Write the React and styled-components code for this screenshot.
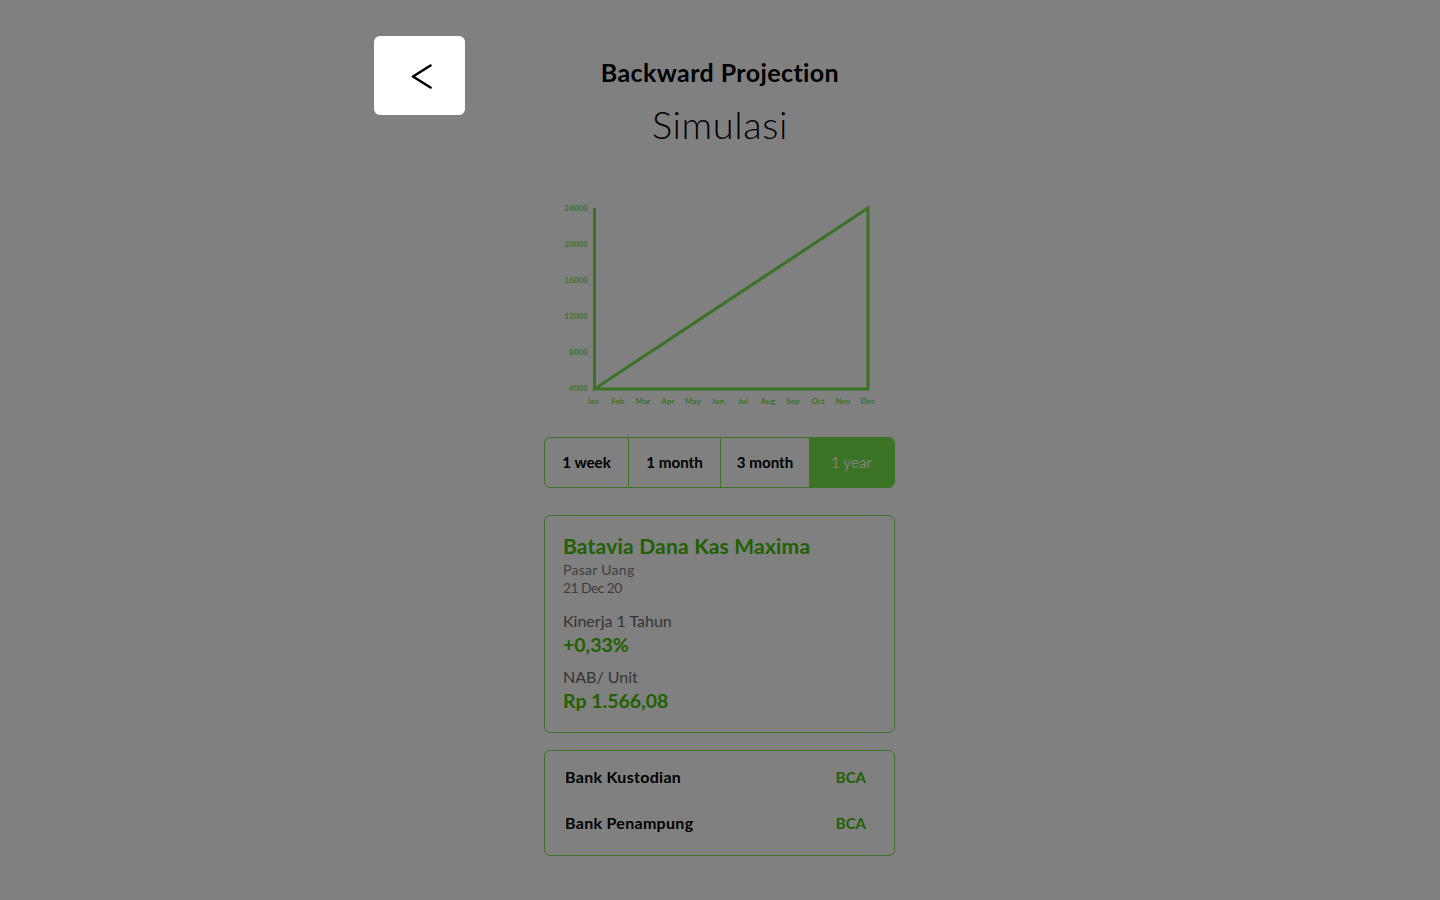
import styled, { createGlobalStyle } from "styled-components";

const GREEN = "#3a7324";
const DARK_GREEN = "#1f6000";

const Global = createGlobalStyle`
html, body { margin: 0; background: #808080; }
body { font-family: "Lato", "Open Sans", sans-serif; }
`
const Page = styled.div`
height: 900px;
overflow: hidden;
display: flex;
flex-direction: column;
align-items: center;
padding-top: 36px;
box-sizing: border-box;
`
const Header = styled.div`
width: 692px;
height: 133px;
display: grid;
grid-template-columns: 91px 1fr 91px;
`
const BackButton = styled.button`
width: 91px;
height: 79px;
background: #fff;
border: none;
border-radius: 6px;
padding: 0;
display: flex;
align-items: center;
justify-content: center;
`
const Titles = styled.div`
display: flex;
flex-direction: column;
align-items: center;
`
const Title = styled.h1`
margin: 19px 0 0;
font-size: 25px;
line-height: 34px;
font-weight: 700;
letter-spacing: 0.4px;
color: #000;
`
const Subtitle = styled.h2`
margin: 12px 0 0;
font-size: 38px;
line-height: 46px;
font-weight: 300;
letter-spacing: 0.6px;
color: #000;
`
const ChartBox = styled.div`
width: 351px;
height: 268px;
margin-right: 1px;
`
const Column = styled.div`
width: 351px;
margin-right: 1px;
display: flex;
flex-direction: column;
`
const Tabs = styled.div`
height: 51px;
box-sizing: border-box;
display: grid;
grid-template-columns: 83px 92px 89px 1fr;
border: 1px solid ${GREEN};
border-radius: 6px;
overflow: hidden;
`
const Tab = styled.div`
display: flex;
align-items: center;
justify-content: center;
padding-bottom: 2px;
font-size: 15.2px;
font-weight: ${p => (p.$active ? 400 : 700)};
color: ${p => (p.$active ? "#808080" : "#000")};
background: ${p => (p.$active ? GREEN : "transparent")};
border-left: ${p => (p.$first || p.$active ? "none" : `1px solid ${GREEN}`)};
`
const Card = styled.div`
box-sizing: border-box;
border: 1px solid ${GREEN};
border-radius: 6px;
`
const InfoCard = styled(Card)`
margin-top: 27px;
height: 218px;
padding: 16px 18px 0;
`
const FundName = styled.div`
font-size: 21px;
line-height: 28px;
font-weight: 700;
letter-spacing: 0.2px;
color: ${DARK_GREEN};
`
const Meta = styled.div`
font-size: 14px;
line-height: 18px;
font-weight: 400;
letter-spacing: ${p => p.$spacing || 0}px;
color: #3e3e3e;
margin-top: ${p => p.$top || 0}px;
`
const Label = styled.div`
font-size: 16px;
line-height: 20px;
color: #333;
margin-top: ${p => p.$top}px;
`
const Value = styled.div`
font-size: 19.5px;
line-height: 26px;
font-weight: 700;
color: ${DARK_GREEN};
padding-top: 1px;
`
const BankCard = styled(Card)`
margin-top: 17px;
height: 106px;
padding: 15px 28px 0 20px;
display: flex;
flex-direction: column;
gap: 25px;
`
const BankRow = styled.div`
display: flex;
justify-content: space-between;
align-items: center;
height: 21px;
`
const BankName = styled.span`
font-size: 16px;
font-weight: 700;
letter-spacing: 0.3px;
color: #000;
`
const BankValue = styled.span`
font-size: 15px;
font-weight: 700;
color: ${DARK_GREEN};
`
const AxisText = styled.text`
font-family: "Lato", sans-serif;
font-size: 8px;
font-weight: 700;
letter-spacing: 0.1px;
fill: ${GREEN};
`

const months = ["Jan", "Feb", "Mar", "Apr", "May", "Jun", "Jul", "Aug", "Sep", "Oct", "Nov", "Dec"];
const ticks = ["24000", "20000", "16000", "12000", "8000", "4000"];

const Chart = () => (
    <svg width="351" height="268" viewBox="0 0 351 268">
        {ticks.map((t, i) => (
            <AxisText key={t} x="44" y={42 + i * 36} textAnchor="end">{t}</AxisText>
        ))}
        {months.map((m, i) => (
            <AxisText key={m} x={49 + i * 25} y="235" textAnchor="middle">{m}</AxisText>
        ))}
        <path
            d="M50.5 220 H324 V39 L50.5 220 V39"
            fill="none"
            stroke={GREEN}
            strokeWidth="3"
        />
    </svg>
);

const App = () => {
    return (
        <Page>
            <Global />
            <Header>
                <BackButton aria-label="back">
                    <svg width="24" height="28" viewBox="0 0 24 28">
                        <path d="M22.5 3.5 L5 14.5 L22.5 25.5" fill="none" stroke="#000" strokeWidth="2.6" strokeLinecap="round" strokeLinejoin="round" />
                    </svg>
                </BackButton>
                <Titles>
                    <Title>Backward Projection</Title>
                    <Subtitle>Simulasi</Subtitle>
                </Titles>
            </Header>
            <ChartBox>
                <Chart />
            </ChartBox>
            <Column>
                <Tabs>
                    <Tab $first>1 week</Tab>
                    <Tab>1 month</Tab>
                    <Tab>3 month</Tab>
                    <Tab $active>1 year</Tab>
                </Tabs>
                <InfoCard>
                    <FundName>Batavia Dana Kas Maxima</FundName>
                    <Meta $top={1} $spacing={0.3}>Pasar Uang</Meta>
                    <Meta $spacing={-0.6}>21 Dec 20</Meta>
                    <Label $top={14}>Kinerja 1 Tahun</Label>
                    <Value>+0,33%</Value>
                    <Label $top={9}>NAB/ Unit</Label>
                    <Value>Rp 1.566,08</Value>
                </InfoCard>
                <BankCard>
                    <BankRow>
                        <BankName>Bank Kustodian</BankName>
                        <BankValue>BCA</BankValue>
                    </BankRow>
                    <BankRow>
                        <BankName>Bank Penampung</BankName>
                        <BankValue>BCA</BankValue>
                    </BankRow>
                </BankCard>
            </Column>
        </Page>
    );
};

export default App;
